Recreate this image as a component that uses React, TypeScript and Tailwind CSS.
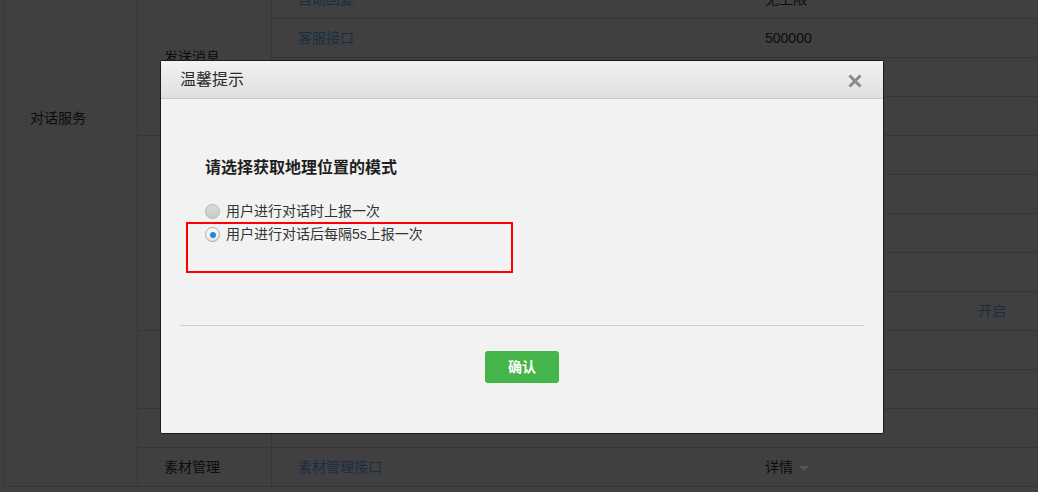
import React, { useState } from 'react';

interface Row {
  name: string;
  value?: string;
  action?: string;
  arrow?: boolean;
}

// 背景表格（遮罩下）
const rows: Row[] = [
  { name: '自动回复', value: '无上限' },
  { name: '客服接口', value: '500000' },
  { name: '' },
  { name: '' },
  { name: '' },
  { name: '' },
  { name: '' },
  { name: '' },
  { name: '', action: '开启' },
  { name: '' },
  { name: '' },
  { name: '' },
  { name: '素材管理接口', value: '详情', arrow: true },
];

const groups = [
  { label: '发送消息', span: 4 },
  { label: '', span: 5 },
  { label: '', span: 2 },
  { label: '', span: 1 },
  { label: '素材管理', span: 1 },
];

const font = "font-['Liberation_Sans','Noto_Sans_CJK_SC',sans-serif]";

const App: React.FC = () => {
  const [mode, setMode] = useState(1);

  return (
    <main className={`relative h-[492px] w-[1038px] overflow-hidden bg-[#404040] ${font}`}>
      <div className="-mt-[20px] ml-[3px] flex items-start border-l border-[#363636]">
        <div className="h-[507px] w-[134px] shrink-0 border-b border-r border-[#363636] pl-[26px] pt-[126px]">
          <span className="text-[14px] leading-[20px] text-[#0c0c0c]">对话服务</span>
        </div>
        <div className="w-[134px] shrink-0 border-r border-[#363636]">
          {groups.map((g, i) => (
            <div
              key={i}
              className="flex items-center border-b border-[#363636] pl-[26px]"
              style={{ height: g.span * 39 }}
            >
              <span className="text-[14px] text-[#0c0c0c]">{g.label}</span>
            </div>
          ))}
        </div>
        <div className="flex-1">
          {rows.map((r, i) => (
            <div key={i} className="flex h-[39px] items-center border-b border-[#363636] text-[14px]">
              <div className="w-[493px] pl-[26px] text-[#1b2d45]">{r.name}</div>
              <div className="flex w-[200px] items-center gap-[6px] text-[#0c0c0c]">
                {r.value}
                {r.arrow && <span className="mt-[2px] border-x-[5px] border-t-[5px] border-x-transparent border-t-[#555]" />}
              </div>
              <div className="pl-[13px] text-[#1b2d45]">{r.action}</div>
            </div>
          ))}
        </div>
      </div>

      {/* 弹窗 */}
      <div className="absolute left-[160px] top-[60px] flex h-[374px] w-[724px] flex-col rounded-[2px] border border-[#1c1c1c] bg-[#f2f2f2]">
        <div className="flex h-[38px] items-center justify-between border-b border-[#c8c8c8] bg-gradient-to-b from-[#f2f2f2] to-[#e0e0e0] pl-[19px] pr-[20px]">
          <span className="text-[16px] text-[#2b2b2b]">温馨提示</span>
          <svg width="16" height="16" viewBox="0 0 16 16" className="mt-[2px]">
            <path d="M2.5 2.5 L13.5 13.5 M13.5 2.5 L2.5 13.5" stroke="#8a8a8a" strokeWidth="3" />
          </svg>
        </div>

        <div className="relative flex-1 px-[19px]">
          <div className="pl-[25px] pt-[57px]">
            <h3 className="text-[16px] font-bold leading-[24px] text-[#1f1f1f]">请选择获取地理位置的模式</h3>
            <div className="mt-[20px] flex flex-col">
              {['用户进行对话时上报一次', '用户进行对话后每隔5s上报一次'].map((t, i) => (
                <label key={i} className="flex h-[23px] cursor-pointer items-center gap-[6px] text-[14px] text-[#333]" onClick={() => setMode(i)}>
                  {mode === i ? (
                    <span className="flex h-[15px] w-[15px] items-center justify-center rounded-full border border-[#a9a9a9] bg-gradient-to-b from-[#fdfdfd] to-[#e6e6e6]">
                      <span className="h-[6px] w-[6px] rounded-full bg-[#1e88e5]" />
                    </span>
                  ) : (
                    <span className="h-[15px] w-[15px] rounded-full border border-[#b5b5b5] bg-gradient-to-b from-[#dcdcdc] to-[#cacaca]" />
                  )}
                  {t}
                </label>
              ))}
            </div>
          </div>

          <div className="absolute left-[25px] top-[123px] h-[51px] w-[327px] border-2 border-[#ff0000]" />

          <div className="mt-[79px] border-t border-[#cccccc]" />
          <div className="mt-[25px] flex justify-center">
            <button className="h-[32px] w-[74px] rounded-[3px] bg-[#44b549] text-[14px] font-bold text-white">确认</button>
          </div>
        </div>
      </div>
    </main>
  );
};

export default App;
